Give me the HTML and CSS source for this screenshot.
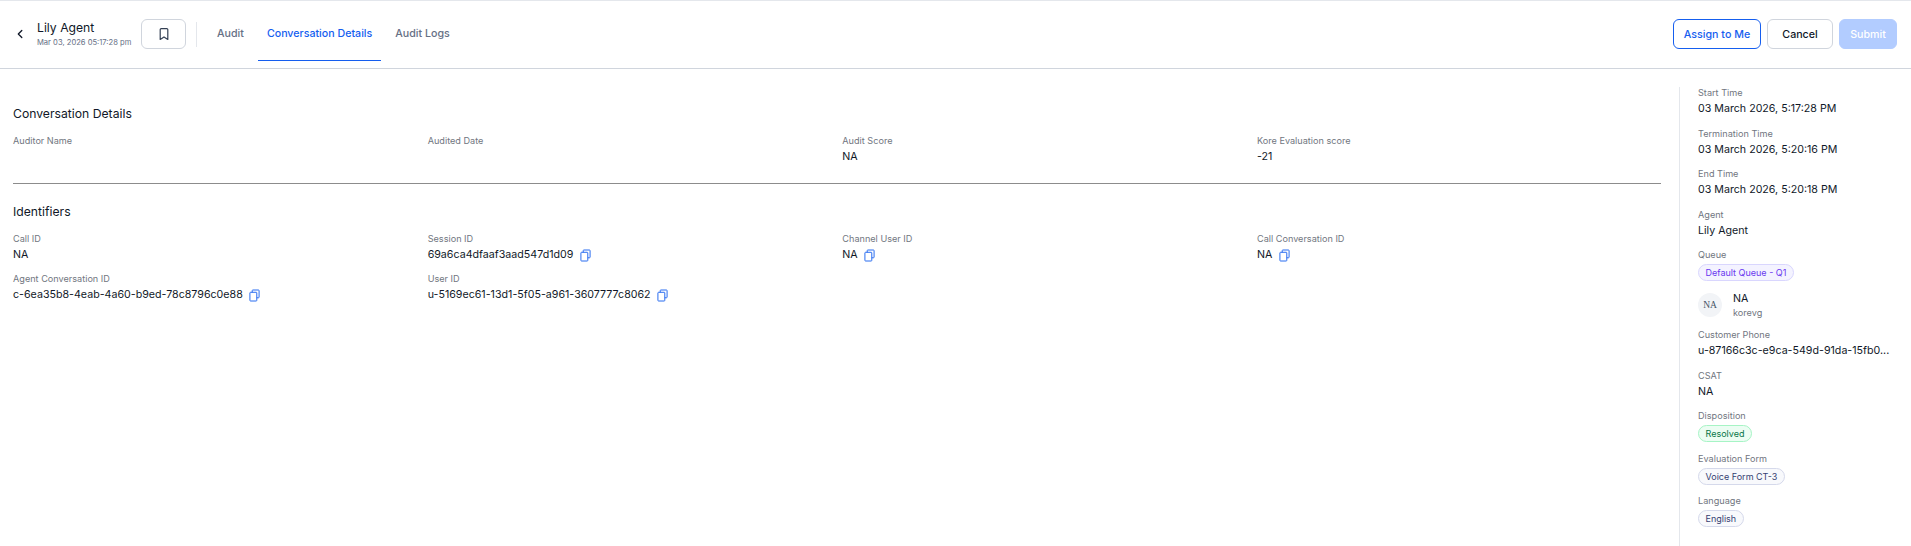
FILE: index.html
```html
<!DOCTYPE html>
<html lang="en">
<head>
<meta charset="utf-8">
<title>Conversation Details</title>
<link rel="stylesheet" href="styles.css">
</head>
<body>
<header class="topbar">
  <div class="topbar-left">
    <button class="back" aria-label="Back"><svg width="14" height="14" viewBox="0 0 14 14"><path d="M8.8 3.5 5.3 7l3.500 3.500" fill="none" stroke="#101828" stroke-width="1.300" stroke-linecap="round" stroke-linejoin="round"/></svg></button>
    <div class="who">
      <div class="who-name">Lily Agent</div>
      <div class="who-date">Mar 03, 2026 05:17:28 pm</div>
    </div>
    <button class="bookmark" aria-label="Bookmark"><svg width="14" height="14" viewBox="0 0 14 14"><path d="M3.2 2.600c0-.6.4-1 1-1h5.600c.6 0 1 .4 1 1v9.800L7 9.900l-3.800 2.500z" fill="none" stroke="#344054" stroke-width="1.200" stroke-linejoin="round"/></svg></button>
    <span class="vrule"></span>
    <nav class="tabs">
      <a class="tab">Audit</a>
      <a class="tab tab-active">Conversation Details</a>
      <a class="tab">Audit Logs</a>
    </nav>
  </div>
  <div class="actions">
    <button class="btn btn-outline">Assign to Me</button>
    <button class="btn btn-plain">Cancel</button>
    <button class="btn btn-disabled">Submit</button>
  </div>
</header>
<div class="page">
  <main class="main">
    <section class="section-first">
      <h2 class="heading">Conversation Details</h2>
      <div class="grid">
        <div class="field"><div class="label">Auditor Name</div></div>
        <div class="field"><div class="label">Audited Date</div></div>
        <div class="field"><div class="label">Audit Score</div><div class="value">NA</div></div>
        <div class="field"><div class="label">Kore Evaluation score</div><div class="value">-21</div></div>
      </div>
    </section>
    <section class="section">
      <h2 class="heading">Identifiers</h2>
      <div class="grid">
        <div class="field"><div class="label">Call ID</div><div class="value">NA</div></div>
        <div class="field"><div class="label">Session ID</div><div class="value">69a6ca4dfaaf3aad547d1d09<svg class="copy" viewBox="0 0 12 14"><path d="M3.500 3.500V1.600c0-.3.2-.6.6-.6h6.300c.3 0 .6.3.6.6v7.300c0 .3-.3.6-.6.6H8.500M1.600 3.500h6.300c.3 0 .6.3.6.6v8.300c0 .3-.3.6-.6.6H1.600c-.3 0-.6-.3-.6-.6V4.100c0-.3.3-.6.6-.6z"/></svg></div></div>
        <div class="field"><div class="label">Channel User ID</div><div class="value">NA<svg class="copy" viewBox="0 0 12 14"><path d="M3.500 3.500V1.600c0-.3.2-.6.6-.6h6.300c.3 0 .6.3.6.6v7.300c0 .3-.3.6-.6.6H8.500M1.600 3.500h6.300c.3 0 .6.3.6.6v8.300c0 .3-.3.6-.6.6H1.600c-.3 0-.6-.3-.6-.6V4.100c0-.3.3-.6.6-.6z"/></svg></div></div>
        <div class="field"><div class="label">Call Conversation ID</div><div class="value">NA<svg class="copy" viewBox="0 0 12 14"><path d="M3.500 3.500V1.600c0-.3.2-.6.6-.6h6.300c.3 0 .6.3.6.6v7.300c0 .3-.3.6-.6.6H8.500M1.600 3.500h6.300c.3 0 .6.3.6.6v8.300c0 .3-.3.6-.6.6H1.600c-.3 0-.6-.3-.6-.6V4.100c0-.3.3-.6.6-.6z"/></svg></div></div>
        <div class="field"><div class="label">Agent Conversation ID</div><div class="value">c-6ea35b8-4eab-4a60-b9ed-78c8796c0e88<svg class="copy" viewBox="0 0 12 14"><path d="M3.500 3.500V1.600c0-.3.2-.6.6-.6h6.300c.3 0 .6.3.6.6v7.300c0 .3-.3.6-.6.6H8.500M1.600 3.500h6.300c.3 0 .6.3.6.6v8.300c0 .3-.3.6-.6.6H1.600c-.3 0-.6-.3-.6-.6V4.100c0-.3.3-.6.6-.6z"/></svg></div></div>
        <div class="field"><div class="label">User ID</div><div class="value">u-5169ec61-13d1-5f05-a961-3607777c8062<svg class="copy" viewBox="0 0 12 14"><path d="M3.500 3.500V1.600c0-.3.2-.6.6-.6h6.300c.3 0 .6.3.6.6v7.300c0 .3-.3.6-.6.6H8.500M1.600 3.500h6.300c.3 0 .6.3.6.6v8.300c0 .3-.3.6-.6.6H1.600c-.3 0-.6-.3-.6-.6V4.100c0-.3.3-.6.6-.6z"/></svg></div></div>
      </div>
    </section>
  </main>
  <aside class="side">
    <div class="sfield"><div class="label">Start Time</div><div class="value">03 March 2026, 5:17:28 PM</div></div>
    <div class="sfield"><div class="label">Termination Time</div><div class="value">03 March 2026, 5:20:16 PM</div></div>
    <div class="sfield"><div class="label">End Time</div><div class="value">03 March 2026, 5:20:18 PM</div></div>
    <div class="sfield"><div class="label">Agent</div><div class="value">Lily Agent</div></div>
    <div class="sfield"><div class="label">Queue</div><div class="pill pill-purple">Default Queue - Q1</div></div>
    <div class="person">
      <div class="avatar">NA</div>
      <div><div class="person-name">NA</div><div class="person-sub">korevg</div></div>
    </div>
    <div class="sfield"><div class="label">Customer Phone</div><div class="value">u-87166c3c-e9ca-549d-91da-15fb0...</div></div>
    <div class="sfield"><div class="label">CSAT</div><div class="value">NA</div></div>
    <div class="sfield"><div class="label">Disposition</div><div class="pill pill-green">Resolved</div></div>
    <div class="sfield"><div class="label">Evaluation Form</div><div class="pill pill-grey">Voice Form CT-3</div></div>
    <div class="sfield"><div class="label">Language</div><div class="pill pill-grey">English</div></div>
  </aside>
</div>
</body>
</html>
```
FILE: styles.css
```css
* { box-sizing: border-box; }
html, body { margin: 0; height: 100%; }
body { background: #fff; color: #101828; font-family: Inter, "Liberation Sans", sans-serif; overflow: hidden; }
button { font-family: inherit; cursor: pointer; }

.topbar { height: 69px; border-top: 1px solid #e4e7ec; border-bottom: 1px solid #d0d5dd; display: flex; justify-content: space-between; padding: 18px 14px 0 13px; }
.topbar-left { display: flex; align-items: flex-start; }
.back { width: 14px; height: 14px; padding: 0; border: 0; background: none; margin: 8px 10px 0 0; display: flex; }
.who { width: 104px; padding-top: 1px; }
.who-name { font-size: 12.2px; line-height: 16px; font-weight: 400; }
.who-date { font-size: 7.6px; line-height: 10px; color: #667085; margin-top: 1.5px; white-space: nowrap; }
.bookmark { width: 45px; height: 30px; border: 1px solid #d0d5dd; border-radius: 6px; background: #fff; display: flex; align-items: center; justify-content: center; padding: 0; }
.vrule { width: 1px; height: 25px; background: #e4e7ec; margin: 3px 0 0 10px; }
.tabs { display: flex; margin-left: 11px; gap: 5px; }
.tab { height: 42px; padding: 6px 9px 0; font-size: 10.66px; line-height: 18px; font-weight: 450; color: #667085; }
.tab-active { color: #155eef; border-bottom: 1px solid #155eef; }

.actions { display: flex; gap: 6px; }
.btn { height: 30px; border-radius: 6px; font-size: 10.66px; font-weight: 450; padding: 0; }
.btn-outline { width: 88px; background: #fff; border: 1px solid #155eef; color: #155eef; }
.btn-plain { width: 66px; background: #fff; border: 1px solid #d0d5dd; color: #101828; }
.btn-disabled { width: 58px; background: #b2ccff; border: 1px solid #b2ccff; color: #fff; }

.page { display: flex; height: 477px; }
.main { width: 1661px; padding-left: 13px; flex: none; }
.section-first { border-bottom: 1px solid #8c8c8c; height: 115px; padding-top: 35.5px; }
.section { padding-top: 19px; }
.heading { margin: 0 0 12px; font-size: 12.2px; line-height: 18px; font-weight: 400; color: #101828; }
.grid { display: grid; grid-template-columns: repeat(4, 1fr); column-gap: 10.67px; row-gap: 10px; }
.field { min-height: 30px; }
.label { font-size: 9.14px; line-height: 12px; color: #717680; }
.value { font-size: 10.66px; line-height: 16px; margin-top: 2px; color: #101828; display: flex; align-items: center; white-space: nowrap; }
.copy { width: 11px; height: 13px; margin-left: 6.5px; fill: none; stroke: #155eef; stroke-width: 1; }

.side { margin: 18px 0 0 18px; border-left: 1px solid #e4e7ec; width: 232px; flex: none; padding: 0 20px 0 18px; display: flex; flex-direction: column; align-items: flex-start; gap: 10.5px; }
.pill { display: inline-block; margin-top: 3px; height: 17px; border-radius: 9px; padding: 0 6.5px; font-size: 9px; line-height: 15px; border: 1px solid; white-space: nowrap; }
.sfield { display: flex; flex-direction: column; align-items: flex-start; }
.pill-purple { color: #6938ef; background: #f4f3ff; border-color: #d9d6fe; }
.pill-green { color: #067647; background: #ecfdf3; border-color: #a6f4c5; }
.pill-grey { color: #363f72; background: #f8f9fc; border-color: #d5d9eb; }
.person { display: flex; align-items: center; gap: 11px; height: 27px; }
.avatar { width: 24px; height: 24px; border-radius: 50%; background: #f2f4f7; color: #475467; font-family: "Liberation Serif", serif; font-size: 9.5px; display: flex; align-items: center; justify-content: center; }
.person-name { font-size: 10.66px; line-height: 14px; }
.person-sub { font-size: 9.14px; line-height: 13px; color: #717680; }
```
